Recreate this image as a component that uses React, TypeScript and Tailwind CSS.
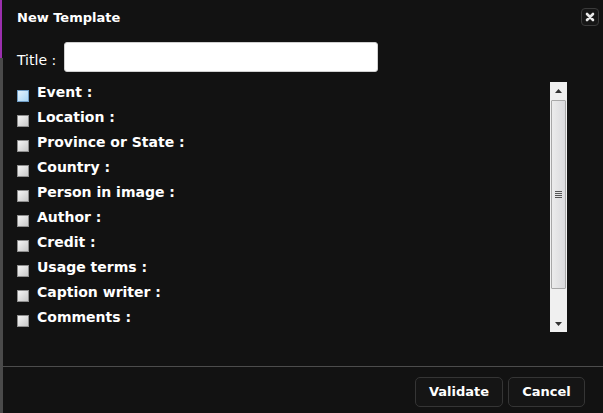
import React from "react";

const fields = [
  "Event :",
  "Location :",
  "Province or State :",
  "Country :",
  "Person in image :",
  "Author :",
  "Credit :",
  "Usage terms :",
  "Caption writer :",
  "Comments :",
];

function Checkbox({ hover }: { hover?: boolean }) {
  return (
    <div
      className={
        hover
          ? "w-[12px] h-[12px] mt-[7px] border border-[#6f9cc4] bg-gradient-to-br from-[#e4f3fd] to-[#a9d6f5] shrink-0"
          : "w-[12px] h-[12px] mt-[7px] border border-[#8e8e8e] bg-gradient-to-br from-[#f6f6f6] to-[#c9c9c9] shrink-0"
      }
    />
  );
}

export default function App() {
  return (
    <div
      className="w-[603px] h-[413px] bg-[#121212] flex text-white overflow-hidden"
      style={{ fontFamily: '"DejaVu Sans", Verdana, sans-serif' }}
    >
      <div className="w-[3px] flex flex-col shrink-0">
        <div className="h-[58px] w-[2px] bg-[#9b2fae]" />
        <div className="flex-1 w-[3px] bg-[#4a4a4a]" />
      </div>
      <div className="flex-1 flex flex-col">
        <div className="h-[36px] flex items-center justify-between pl-[14px] pr-[4px]">
          <span className="text-[13px] font-bold">New Template</span>
          <div className="w-[18px] h-[18px] mt-[-2px] rounded-[4px] border border-[#3a3a3a] bg-[#161616] flex items-center justify-center">
            <svg width="10" height="10" viewBox="0 0 10 10">
              <path d="M2 2 L8 8 M8 2 L2 8" stroke="#e8e8e8" strokeWidth="2.6" strokeLinecap="round" />
            </svg>
          </div>
        </div>
        <div className="h-[46px] flex items-start pl-[14px] pt-[6px]">
          <span className="text-[14px] w-[47px] mt-[8px]">Title :</span>
          <div className="w-[314px] h-[30px] bg-white rounded-[3px] border border-[#d0d0d0]" />
        </div>
        <div className="h-[250px] flex pr-[36px]">
          <div className="flex-1 flex flex-col pl-[14px] mt-[-2px]">
            {fields.map((f, i) => (
              <div key={f} className="h-[25px] flex items-center">
                <Checkbox hover={i === 0} />
                <span className="ml-[8px] text-[14px] font-bold leading-[25px]">{f}</span>
              </div>
            ))}
          </div>
          <div className="w-[17px] h-[250px] bg-[#f0f0f0] flex flex-col items-center">
            <div className="h-[17px] w-full flex items-center justify-center">
              <svg width="7" height="4" viewBox="0 0 7 4">
                <path d="M3.5 0 L7 4 L0 4 Z" fill="#333" />
              </svg>
            </div>
            <div className="w-[15px] h-[189px] mt-[1px] border border-[#a8a8a8] rounded-[1px] bg-gradient-to-r from-[#ececec] to-[#dadadd] flex items-center justify-center">
              <div className="flex flex-col gap-[1px]">
                <div className="w-[7px] h-[1px] bg-[#555]" />
                <div className="w-[7px] h-[1px] bg-[#555]" />
                <div className="w-[7px] h-[1px] bg-[#555]" />
                <div className="w-[7px] h-[1px] bg-[#555]" />
              </div>
            </div>
            <div className="flex-1" />
            <div className="h-[17px] w-full flex items-center justify-center">
              <svg width="7" height="4" viewBox="0 0 7 4">
                <path d="M0 0 L7 0 L3.5 4 Z" fill="#333" />
              </svg>
            </div>
          </div>
        </div>
        <div className="h-[34px]" />
        <div className="h-[1px] bg-[#4c4c4c]" />
        <div className="flex-1 flex justify-end items-start pt-[10px] pr-[18px] gap-[5px]">
          <div className="w-[88px] h-[30px] rounded-[5px] border border-[#353535] bg-[#151515] flex items-center justify-center text-[13px] font-bold">
            Validate
          </div>
          <div className="w-[77px] h-[30px] rounded-[5px] border border-[#353535] bg-[#151515] flex items-center justify-center text-[13px] font-bold">
            Cancel
          </div>
        </div>
      </div>
    </div>
  );
}
